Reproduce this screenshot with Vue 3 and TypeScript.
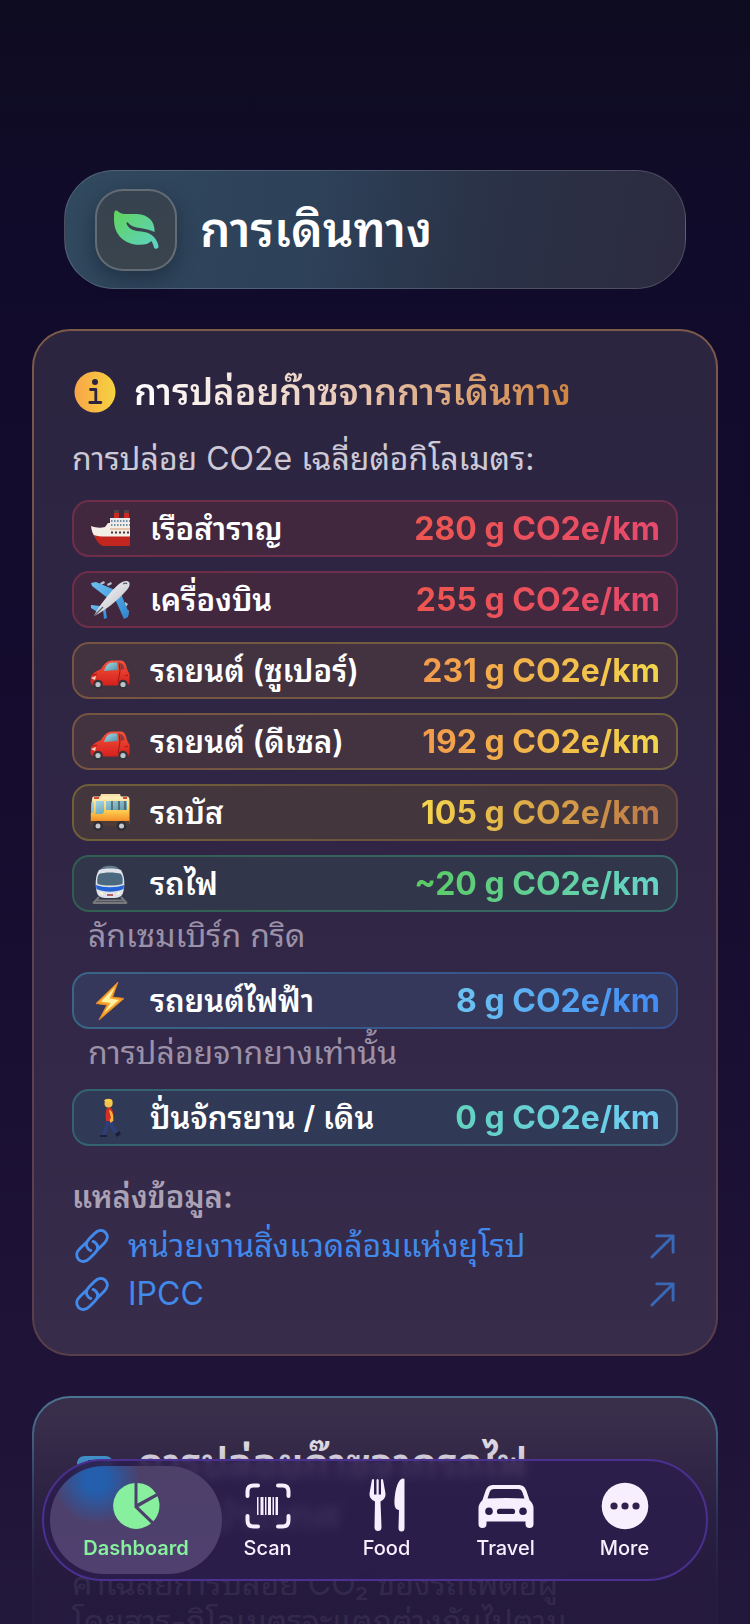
<script setup lang="ts">
type Tone = 'red' | 'orange' | 'amber' | 'green' | 'blue' | 'teal'
type Icon = 'ship' | 'plane' | 'car' | 'bus' | 'train' | 'bolt' | 'walk'

interface Mode {
  icon: Icon
  label: string
  value: string
  tone: Tone
  note?: string
}

const modes: Mode[] = [
  { icon: 'ship', label: 'เรือสำราญ', value: '280 g CO2e/km', tone: 'red' },
  { icon: 'plane', label: 'เครื่องบิน', value: '255 g CO2e/km', tone: 'red' },
  { icon: 'car', label: 'รถยนต์ (ซูเปอร์)', value: '231 g CO2e/km', tone: 'orange' },
  { icon: 'car', label: 'รถยนต์ (ดีเซล)', value: '192 g CO2e/km', tone: 'orange' },
  { icon: 'bus', label: 'รถบัส', value: '105 g CO2e/km', tone: 'amber' },
  { icon: 'train', label: 'รถไฟ', value: '~20 g CO2e/km', tone: 'green', note: 'ลักเซมเบิร์ก กริด' },
  { icon: 'bolt', label: 'รถยนต์ไฟฟ้า', value: '8 g CO2e/km', tone: 'blue', note: 'การปล่อยจากยางเท่านั้น' },
  { icon: 'walk', label: 'ปั่นจักรยาน / เดิน', value: '0 g CO2e/km', tone: 'teal' },
]

const sources: string[] = ['หน่วยงานสิ่งแวดล้อมแห่งยุโรป', 'IPCC']
const tabs: string[] = ['Dashboard', 'Scan', 'Food', 'Travel', 'More']
</script>

<template>
  <div class="screen">
    <svg class="defs" width="0" height="0" aria-hidden="true">
      <defs>
        <linearGradient id="leafFill" x1="0" y1="0" x2="1" y2="1">
          <stop offset="0" stop-color="#62d35c" />
          <stop offset="1" stop-color="#5cd3c8" />
        </linearGradient>
        <linearGradient id="infoFill" x1="0" y1="0" x2="1" y2="0">
          <stop offset="0" stop-color="#f8a548" />
          <stop offset="1" stop-color="#f6d33f" />
        </linearGradient>
        <linearGradient id="redBody" x1="0" y1="0" x2="0" y2="1">
          <stop offset="0" stop-color="#f5533c" />
          <stop offset="1" stop-color="#d4201c" />
        </linearGradient>
        <linearGradient id="glass" x1="0" y1="0" x2="1" y2="1">
          <stop offset="0" stop-color="#a9dcea" />
          <stop offset="1" stop-color="#4f8ea3" />
        </linearGradient>
        <linearGradient id="busBody" x1="0" y1="0" x2="0" y2="1">
          <stop offset="0" stop-color="#fff0c4" />
          <stop offset=".55" stop-color="#fdc94d" />
          <stop offset="1" stop-color="#f07a1c" />
        </linearGradient>
        <linearGradient id="wing" x1="0" y1="0" x2="1" y2="1">
          <stop offset="0" stop-color="#6dc0f2" />
          <stop offset="1" stop-color="#2f86cf" />
        </linearGradient>
        <linearGradient id="hull" x1="0" y1="0" x2="1" y2="1">
          <stop offset="0" stop-color="#ffffff" />
          <stop offset="1" stop-color="#b4b8c0" />
        </linearGradient>
      </defs>
    </svg>

    <main class="content">
      <header class="hero">
        <span class="hero-icon">
          <svg viewBox="0 0 48 42" width="46" height="40" aria-hidden="true">
            <path fill="url(#leafFill)" fill-rule="evenodd" d="M1.500 1.500C2.500 0 4 .3 5.500 1.800C10 5.500 17 3.800 25 4.200C37 4.800 44 12 43.500 23C40 21.500 36.500 20 31 19.300C24 18.500 19 17.500 15.700 13.400C14.700 12.300 13.500 13.400 14.200 14.700C17 20.500 22 22 29.500 22.700C38 23.600 43.500 27 46.500 34C47.500 36.500 48 38.500 47.300 39.700C46 41.500 43.500 41 42.800 39C42.200 36.500 41.500 34.500 40 32.500C37 35.500 33 36.800 27 36.500C12 36 1.500 26 1 12C.9 8 .8 3 1.500 1.500Z" />
          </svg>
        </span>
        <h1>การเดินทาง</h1>
      </header>

      <section class="card card-emissions">
        <h2 class="card-title">
          <svg viewBox="0 0 42 42" width="42" height="42" aria-hidden="true">
            <circle cx="21" cy="21" r="20.500" fill="url(#infoFill)" />
            <circle cx="21" cy="11" r="3" fill="#2b2540" />
            <path d="M16.500 18.500H21.800V31M15.800 31.500H26.800" fill="none" stroke="#2b2540" stroke-width="2.800" stroke-linecap="round" stroke-linejoin="round" />
          </svg>
          <span class="title-text">การปล่อยก๊าซจากการเดินทาง</span>
        </h2>
        <p class="lead">การปล่อย CO2e เฉลี่ยต่อกิโลเมตร:</p>

        <ul class="modes">
          <li v-for="mode in modes" :key="mode.label">
            <div class="mode" :class="mode.tone">
              <svg class="mode-icon" viewBox="0 0 40 40" width="40" height="40" aria-hidden="true">
                <g v-if="mode.icon === 'ship'">
                  <path d="M24 3h5v8h-5zM34 3h5v8h-5z" fill="#c92b22" />
                  <path d="M24 1h5v3h-5zM34 1h5v3h-5z" fill="#4b4548" />
                  <path d="M20 9h20v13H20z" fill="#e8eaec" />
                  <path d="M1 17c5 2 10 2 14 1l3-4h22v15H6C3 26 1.500 22 1 17Z" fill="#f3efe6" />
                  <path d="M4 26c4 1.500 9 1.800 14 1.500H40V37H13C9 36 6 31 4 26Z" fill="#c2261e" />
                  <path d="M21 12h19M21 16h19" stroke="#46718f" stroke-width="1.500" stroke-dasharray="1.500 1.500" />
                  <path d="M20 20h20" stroke="#d79a73" />
                  <path d="M21 23.500h19" stroke="#41383b" stroke-width="2" stroke-dasharray="2 2" />
                </g>
                <g v-else-if="mode.icon === 'plane'">
                  <path d="M10 3l4-2 1 2-4 2zM17 4l4-2 1 2-4 2zM35 22l3 2-2 3-2-2zM36 29l3 2-2 3-2-2z" fill="#b9c3cf" />
                  <path d="M1 3l5-1 19 8-6 9L2 6zM38 37l-4 2-9-20 6-5 8 19z" fill="url(#wing)" />
                  <path d="M1 25l9 1 4 3-5 4-8-5zM14 39l-1-9-3-2 5-3 2 13z" fill="url(#wing)" />
                  <path d="M4 36C8 27 20 12 29 4C33 1 37 0 39 2C41 5 38 9 35 12C27 21 13 32 4 36Z" fill="url(#hull)" />
                  <path d="M33 4c2-1 3.500-1 4 0M4 36l9-9" fill="none" stroke="#555b66" stroke-width="1.200" />
                </g>
                <g v-else-if="mode.icon === 'car'">
                  <path d="M1 26C2 22 7 20 11 18C14 13 17 10 22 9.500H30C34 9.500 36 12 37 18L39.500 23V32C39 34 37 34.500 34 34.500H6C2 34 .5 33 .5 30Z" fill="url(#redBody)" />
                  <path d="M14 20C16 14 18 12 22 11.500H27L28 19Z" fill="url(#glass)" />
                  <path d="M30 12C33 12.500 34 15 34.500 18L30.500 19Z" fill="#8a3b3b" />
                  <path d="M29 11.500L30 20L28 31M2 24l5-1M38 24l-3 1" fill="none" stroke="#a5150f" stroke-width="1" />
                  <path d="M1 27l5-2-1 4z" fill="#f7d9c8" />
                  <circle cx="8" cy="33.500" r="4.800" fill="#34343a" />
                  <circle cx="33" cy="33.500" r="4.800" fill="#34343a" />
                  <circle cx="8" cy="33.500" r="2.600" fill="#bfc3c9" />
                  <circle cx="33" cy="33.500" r="2.600" fill="#bfc3c9" />
                </g>
                <g v-else-if="mode.icon === 'bus'">
                  <path d="M11 1h19l1 3h-21z" fill="#f4dfa6" />
                  <path d="M4 3.500H37C39 3.500 39.500 5 39.500 8V31H.8V21L2 7C2.200 4.500 2.500 3.500 4 3.500Z" fill="url(#busBody)" />
                  <path d="M.8 28H39.500V33H.8Z" fill="#4d3c36" />
                  <path d="M6 8H14V19L12 21H5.500Z M16 8H37V17H16Z M1.500 9H4L3.500 20H1Z" fill="url(#glass)" />
                  <path d="M22 8v9M29 8v9M35 8v9" stroke="#4b4a45" stroke-width="1.300" />
                  <path d="M4 5h5M33 5h4" stroke="#e0492e" stroke-width="2" />
                  <circle cx="8" cy="33" r="5" fill="#2e2e33" />
                  <circle cx="31.500" cy="33" r="5" fill="#2e2e33" />
                  <circle cx="8" cy="33" r="2.500" fill="#c8c9cc" />
                  <circle cx="31.500" cy="33" r="2.500" fill="#c8c9cc" />
                </g>
                <g v-else-if="mode.icon === 'train'">
                  <path d="M9 33L3 39.500M31 33L37 39.500M6 36.500H34M3 39H37" stroke="#77787c" stroke-width="2" />
                  <path d="M11 5C13 .5 27 .5 29 5L31 8H9Z" fill="#667a8e" />
                  <path d="M9 6C14 4 26 4 31 6C35 12 35 22 33 29C31 34 27 34 20 34S9 34 7 29C5 22 5 12 9 6Z" fill="#dfe3e9" />
                  <path d="M9 10C14 8 26 8 31 10C33 13 33 16 32.500 20C25 22 15 22 7.500 20C7 16 7 13 9 10Z" fill="#4b6a80" />
                  <path d="M6 21C15 24 25 24 34 21L33.500 25C25 28.500 15 28.500 6.500 25Z" fill="#2463d6" />
                  <path d="M10 29l3 1M30 29l-3 1" stroke="#fff7cf" stroke-width="2" />
                  <path d="M17 31h6" stroke="#a33a36" stroke-width="1.500" />
                </g>
                <g v-else-if="mode.icon === 'bolt'">
                  <path d="M28 1L6 22.500L17 24L9 39L34 17.500L22.500 16Z" fill="#f7a62b" stroke="#e6872a" stroke-width="1" stroke-linejoin="round" />
                  <path d="M25 6L11 20.500L20.500 22L14 32L29 19L19.500 17.500Z" fill="#fff0a2" />
                </g>
                <g v-else>
                  <path d="M16 22L23 21C23 26 26 31 29 35L26 37C22 33 20 29 19 26C18 31 17 36 14 38L11 36C14 33 15 29 16 22Z" fill="#2f3e78" />
                  <path d="M10 37h7v2h-7zM25 36l4-3 2 3-4 3z" fill="#1c2036" />
                  <path d="M17 10C19 8 22 10 23 14L24 23H16C15.500 18 15.500 13 17 10Z" fill="#d52e27" />
                  <path d="M19 12C22 12 24 17 23 23L20.500 25L19.500 22L21 20Z" fill="#f6b53b" />
                  <circle cx="18.500" cy="5.500" r="4" fill="#f3c24e" />
                  <path d="M14 3C15 0 22 0 22.500 3L22 8L20 5Z" fill="#f8cf47" />
                </g>
              </svg>
              <span class="mode-label">{{ mode.label }}</span>
              <span class="mode-value">{{ mode.value }}</span>
            </div>
            <p v-if="mode.note" class="note">{{ mode.note }}</p>
          </li>
        </ul>

        <h3>แหล่งข้อมูล:</h3>
        <ul class="sources">
          <li v-for="source in sources" :key="source">
            <a href="#">
              <svg viewBox="0 0 36 36" width="36" height="36" fill="none" stroke="currentColor" stroke-width="3" stroke-linecap="round" aria-hidden="true">
                <path d="M12.200 14.500L6 20.500C2.300 24 1.800 28.500 4.500 31.500C7.500 34.500 12 34 15.500 30.500L21 25C24.500 21.500 24.500 17.500 21.500 14.800C20.800 14.100 20 13.700 19.200 13.500" />
                <path d="M23.800 21.500L30 15.500C33.700 12 34.200 7.500 31.500 4.500C28.500 1.500 24 2 20.500 5.500L15 11C11.500 14.500 11.500 18.500 14.500 21.200C15.200 21.900 16 22.300 16.800 22.500" />
              </svg>
              <span>{{ source }}</span>
              <svg class="out" viewBox="0 0 26 26" width="25" height="25" fill="none" stroke="currentColor" stroke-width="3" stroke-linecap="round" stroke-linejoin="round" aria-hidden="true">
                <path d="M2 24L24 2M7 2H24V19" />
              </svg>
            </a>
          </li>
        </ul>
      </section>

      <section class="card card-rail">
        <h2 class="card-title rail-title">
          <svg viewBox="0 0 42 48" width="42" height="48" aria-hidden="true">
            <path fill="#46a6e2" fill-rule="evenodd" d="M11 0H31C36 0 39 3 39 8V32C39 37 36 40 31 40H11C6 40 3 37 3 32V8C3 3 6 0 11 0ZM14 4V7H28V4ZM8 12V22H34V12Z" />
          </svg>
          <span>การปล่อยก๊าซจากรถไฟ<br />ตามประเทศ</span>
        </h2>
        <p class="rail-text">ค่าเฉลี่ยการปล่อย CO₂ ของรถไฟต่อผู้<br />โดยสาร-กิโลเมตรจะแตกต่างกันไปตาม</p>
      </section>
    </main>

    <div class="fade"></div>

    <nav class="tabs">
      <button v-for="(tab, i) in tabs" :key="tab" type="button" class="tab" :class="{ active: i === 0 }">
        <svg viewBox="0 0 56 56" width="56" height="56" fill="currentColor" aria-hidden="true">
          <g v-if="tab === 'Dashboard'">
            <path d="M26.500 5A23 23 0 1 0 43 45.500L26.500 29.500Z" />
            <path d="M29.500 5V25.500L48 15.500A23 23 0 0 0 29.500 5Z" />
            <path d="M49.500 18.300L30.500 29L45.300 43.300A23 23 0 0 0 49.500 18.300Z" />
          </g>
          <g v-else-if="tab === 'Scan'">
            <path d="M7.500 18V13.500Q7.500 7.500 13.500 7.500H18M38 7.500H42.500Q48.500 7.500 48.500 13.500V18M48.500 38V42.500Q48.500 48.500 42.500 48.500H38M18 48.500H13.500Q7.500 48.500 7.500 42.500V38" fill="none" stroke="currentColor" stroke-width="4" stroke-linecap="round" />
            <path d="M17 19h1.500v18H17zM20.500 19h3v18h-3zM25 19h1.500v18H25zM28 19h3v18h-3zM32.500 19H34v18h-1.500zM35.500 19H38v18h-2.500z" />
          </g>
          <g v-else-if="tab === 'Food'">
            <path d="M13 1.500Q14.500 .5 15 2V16.500H17.500V2Q18.500 0 19.700 2V16.500H22V2Q22.500 .5 24 1.500L26.500 15.500Q27 21 21.500 23.500L22.500 49Q22.500 53 19 53T15.500 49L16 23.500Q10 21 10.500 15.500Z" />
            <path d="M45.500 1.500V50Q45.500 53.500 42.500 53.500T39.500 50L40 32Q35.500 31.500 35.500 26C35.500 14 38.500 1 44 .5Q45.500 .5 45.500 1.500Z" />
          </g>
          <g v-else-if="tab === 'Travel'">
            <path fill-rule="evenodd" d="M16 7H40C45 7 47 9 48.500 13L51.500 22Q55.500 26 55.500 30V46Q55.500 50 51.500 50T47.500 46V43.500H8.500V46Q8.500 50 4.500 50T.5 46V30Q.5 26 4.500 22L7.500 13C9 9 11 7 16 7ZM17 11C13.500 11 12.500 12 11.500 14.500L9.500 20.500Q28 19.500 46.500 20.500L44.500 14.500C43.500 12 42.500 11 39 11ZM11 29.500A3.800 3.800 0 1 0 11 37.100A3.800 3.800 0 1 0 11 29.500ZM45 29.500A3.800 3.800 0 1 0 45 37.100A3.800 3.800 0 1 0 45 29.500ZM21.500 30.800A2.600 2.600 0 0 0 21.500 36H34.500A2.600 2.600 0 0 0 34.500 30.800Z" />
          </g>
          <g v-else>
            <circle cx="28" cy="28" r="23.300" />
            <g fill="#2f204d">
              <circle cx="17" cy="28" r="3.600" />
              <circle cx="28" cy="28" r="3.600" />
              <circle cx="39" cy="28" r="3.600" />
            </g>
          </g>
        </svg>
        <span>{{ tab }}</span>
      </button>
    </nav>
  </div>
</template>

<style>
body {
  margin: 0;
  background: #110b2b;
}
</style>

<style scoped>
.screen {
  position: relative;
  height: 100vh;
  overflow: hidden;
  box-sizing: border-box;
  background: linear-gradient(#0e0c20, #110b2b 15%, #150c2e 50%, #1f1438 85%, #1f1438);
  color: #fff;
  font-family: Inter, "Noto Sans Thai Looped", "Noto Sans Thai", "Noto Sans", sans-serif;
}

.defs {
  position: absolute;
}

h1, h2, h3, p, ul {
  margin: 0;
  padding: 0;
}

ul {
  list-style: none;
}

.content {
  display: flex;
  flex-direction: column;
  gap: 40px;
  padding: 170px 32px 0;
}

.hero {
  display: flex;
  align-items: center;
  gap: 23px;
  height: 119px;
  margin: 0 32px;
  padding: 0 30px;
  box-sizing: border-box;
  border: 1px solid rgba(255, 255, 255, 0.16);
  border-radius: 50px;
  background: linear-gradient(100deg, #31495e, #2d4159 40%, #2a3348 65%, #2c2a40);
}

.hero-icon {
  display: flex;
  align-items: center;
  justify-content: center;
  width: 82px;
  height: 82px;
  box-sizing: border-box;
  border: 2px solid rgba(255, 255, 255, 0.22);
  border-radius: 28px;
  background: linear-gradient(#36424f, #3a444d);
  box-shadow: 0 8px 20px rgba(10, 20, 35, 0.4);
}

h1 {
  font-size: 48px;
  line-height: 64px;
  font-weight: 600;
}

.card {
  box-sizing: border-box;
  padding: 37px 38px 36px;
  border: 2px solid transparent;
  border-radius: 38px;
}

.card-emissions {
  background:
    linear-gradient(#2b2540, #302545 50%, #372c4a) padding-box,
    linear-gradient(#7d5a48, #5c4350 60%, #593f49) border-box;
}

.card-rail {
  height: 500px;
  background:
    linear-gradient(#3a2f4b, #2b2043 200px) padding-box,
    linear-gradient(#4b7590, #34456a 120px, #2b2548 240px) border-box;
}

.card-title {
  display: flex;
  align-items: center;
  gap: 18px;
  padding-left: 2px;
  font-size: 36px;
  line-height: 48px;
  font-weight: 600;
}

.title-text {
  background: linear-gradient(90deg, #fff, #eacdbd 45%, #cf8440);
  background-clip: text;
  -webkit-background-clip: text;
  color: transparent;
}

.lead {
  margin: 19px 0 17px;
  font-size: 32px;
  line-height: 48px;
  color: #cdc9d6;
}

.modes {
  display: flex;
  flex-direction: column;
  gap: 14px;
}

.mode {
  display: flex;
  align-items: center;
  gap: 20px;
  height: 57px;
  box-sizing: border-box;
  padding: 0 16px;
  border: 2px solid transparent;
  border-radius: 17px;
  font-size: 31px;
  line-height: 44px;
  font-weight: 600;
  background:
    linear-gradient(var(--fill), var(--fill)) padding-box,
    linear-gradient(90deg, var(--edge-a), var(--edge-b)) border-box;
}

.mode-icon {
  flex: none;
}

.mode-label {
  flex: 1;
  white-space: nowrap;
}

.mode-value {
  font-size: 32px;
  font-weight: 700;
  white-space: nowrap;
  background: linear-gradient(90deg, var(--text-a), var(--text-b));
  background-clip: text;
  -webkit-background-clip: text;
  color: transparent;
}

.red { --fill: #41283f; --edge-a: #6f2e48; --edge-b: #6a2f50; --text-a: #ee5650; --text-b: #e54a6c; }
.orange { --fill: #433240; --edge-a: #765443; --edge-b: #71603f; --text-a: #f29a4c; --text-b: #f2d54b; }
.amber { --fill: #44363d; --edge-a: #6f6038; --edge-b: #664840; --text-a: #f7d64b; --text-b: #bd7848; }
.green { --fill: #31364a; --edge-a: #315e50; --edge-b: #376a6b; --text-a: #5bcb62; --text-b: #68d3cb; }
.blue { --fill: #35385b; --edge-a: #396586; --edge-b: #344f8c; --text-a: #6cc3f1; --text-b: #418bf5; }
.teal { --fill: #303a56; --edge-a: #33636f; --edge-b: #415f7a; --text-a: #63d2bf; --text-b: #6fcdf6; }

.note {
  padding-left: 16px;
  margin-top: 2px;
  font-size: 32px;
  line-height: 44px;
  color: #9b91a8;
}

h3 {
  margin-top: 27px;
  font-size: 31px;
  line-height: 48px;
  font-weight: 600;
  color: #aaa1b5;
}

.sources {
  margin-top: 1px;
}

.sources a {
  display: flex;
  align-items: center;
  gap: 18px;
  height: 48px;
  padding: 0 3px 0 2px;
  font-size: 32px;
  line-height: 44px;
  color: #4189ea;
  text-decoration: none;
}

.sources span {
  flex: 1;
}

.out {
  color: #3769b8;
}

.rail-title {
  align-items: flex-start;
  gap: 22px;
  padding-top: 2px;
  font-size: 41px;
  line-height: 52px;
  color: #f1ecf4;
}

.rail-title svg {
  margin-top: 19px;
}

.rail-text {
  margin-top: 24px;
  font-size: 32px;
  line-height: 38px;
  color: #75698a;
}

.fade {
  position: absolute;
  inset: auto 0 0;
  height: 200px;
  background: linear-gradient(transparent, rgba(35, 25, 60, 0.8) 80%);
}

.tabs {
  position: absolute;
  inset: auto 42px 43px;
  display: flex;
  align-items: center;
  height: 122px;
  box-sizing: border-box;
  padding: 0 22px 0 6px;
  border: 2px solid #4a3090;
  border-radius: 61px;
  background: rgba(43, 29, 76, 0.86);
  backdrop-filter: blur(5px);
}

.tab {
  display: flex;
  flex: 1;
  flex-direction: column;
  align-items: center;
  height: 108px;
  padding: 12px 0 0;
  border: 0;
  border-radius: 54px;
  background: none;
  color: #f7effd;
  font: 500 20px/28px Inter, "Noto Sans", sans-serif;
}

.active {
  flex: 0 0 172px;
  margin-right: -14px;
  background:
    radial-gradient(circle at 46px 14px, rgba(34, 96, 176, 0.95) 12px, rgba(34, 96, 176, 0) 44px),
    linear-gradient(#4d4069, #4f4070);
  color: #87ef9e;
  font-weight: 600;
}
</style>
